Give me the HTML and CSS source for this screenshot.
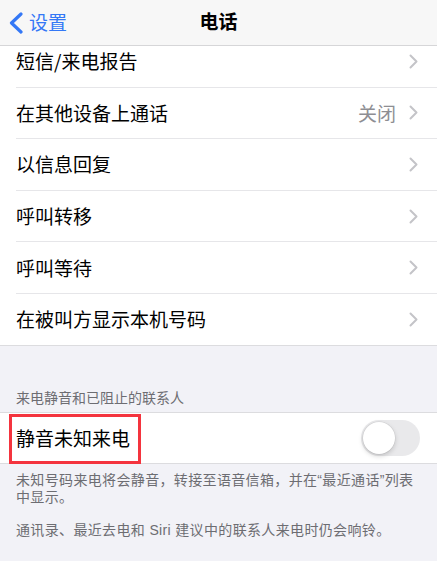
FILE: index.html
```html
<!DOCTYPE html>
<html lang="zh-CN">
<head>
<meta charset="utf-8">
<link rel="stylesheet" href="styles.css">
</head>
<body>
<div class="screen">
  <header class="nav">
    <div class="back">
      <svg class="back-chev" width="16" height="22" viewBox="0 0 16 22"><path d="M13 2 L3.5 11 L13 20" fill="none" stroke="#3478f6" stroke-width="3.2" stroke-linecap="round" stroke-linejoin="round"/></svg>
      <span class="back-label">设置</span>
    </div>
    <div class="title">电话</div>
    <div></div>
  </header>

  <section class="group first">
    <div class="cell"><div class="cell-inner"><span class="label">短信/来电报告</span><span class="acc"><svg class="chev" width="9" height="15" viewBox="0 0 9 15"><path d="M1.5 1.5 L7.5 7.5 L1.5 13.5" fill="none" stroke="#c4c4c8" stroke-width="2" stroke-linecap="round" stroke-linejoin="round"/></svg></span></div></div>
    <div class="cell"><div class="cell-inner"><span class="label">在其他设备上通话</span><span class="acc"><span class="value">关闭</span><svg class="chev" width="9" height="15" viewBox="0 0 9 15"><path d="M1.5 1.5 L7.5 7.5 L1.5 13.5" fill="none" stroke="#c4c4c8" stroke-width="2" stroke-linecap="round" stroke-linejoin="round"/></svg></span></div></div>
    <div class="cell"><div class="cell-inner"><span class="label">以信息回复</span><span class="acc"><svg class="chev" width="9" height="15" viewBox="0 0 9 15"><path d="M1.5 1.5 L7.5 7.5 L1.5 13.5" fill="none" stroke="#c4c4c8" stroke-width="2" stroke-linecap="round" stroke-linejoin="round"/></svg></span></div></div>
    <div class="cell"><div class="cell-inner"><span class="label">呼叫转移</span><span class="acc"><svg class="chev" width="9" height="15" viewBox="0 0 9 15"><path d="M1.5 1.5 L7.5 7.5 L1.5 13.5" fill="none" stroke="#c4c4c8" stroke-width="2" stroke-linecap="round" stroke-linejoin="round"/></svg></span></div></div>
    <div class="cell"><div class="cell-inner"><span class="label">呼叫等待</span><span class="acc"><svg class="chev" width="9" height="15" viewBox="0 0 9 15"><path d="M1.5 1.5 L7.5 7.5 L1.5 13.5" fill="none" stroke="#c4c4c8" stroke-width="2" stroke-linecap="round" stroke-linejoin="round"/></svg></span></div></div>
    <div class="cell"><div class="cell-inner last"><span class="label">在被叫方显示本机号码</span><span class="acc"><svg class="chev" width="9" height="15" viewBox="0 0 9 15"><path d="M1.5 1.5 L7.5 7.5 L1.5 13.5" fill="none" stroke="#c4c4c8" stroke-width="2" stroke-linecap="round" stroke-linejoin="round"/></svg></span></div></div>
  </section>

  <div class="section-header">来电静音和已阻止的联系人</div>

  <section class="group">
    <div class="cell toggle-cell">
      <div class="cell-inner last"><span class="label">静音未知来电</span><span class="switch"><span class="knob"></span></span></div>
      <div class="highlight"></div>
    </div>
  </section>

  <div class="footer">
    <p class="foot-p">未知号码来电将会静音，转接至语音信箱，并在“最近通话”列表中显示。</p>
    <p class="foot-p second">通讯录、最近去电和 Siri 建议中的联系人来电时仍会响铃。</p>
  </div>
</div>
</body>
</html>
```

FILE: styles.css
```css
* { box-sizing: border-box; }
html, body {
  margin: 0;
  padding: 0;
  background: #f2f2f7;
}
body {
  font-family: "Noto Sans CJK SC", "Noto Sans", sans-serif;
  color: #000;
  width: 437px;
  height: 561px;
  overflow: hidden;
}
.screen {
  width: 437px;
  height: 561px;
  overflow: hidden;
  background: #f2f2f7;
}
.nav {
  position: relative;
  z-index: 2;
  height: 46px;
  background: #f7f7f7;
  border-bottom: 1px solid #d6d6d8;
  display: grid;
  grid-template-columns: 1fr auto 1fr;
  align-items: center;
}
.back {
  display: flex;
  align-items: center;
  padding-left: 8px;
  gap: 5px;
  color: #3478f6;
  font-size: 19px;
  line-height: 22px;
}
.back-chev { display: block; flex: none; }
.back-label { margin-top: -2px; }
.title {
  font-size: 19px;
  font-weight: 700;
  line-height: 22px;
  margin-top: -3px;
}
.group {
  background: #fff;
  border-top: 1px solid #dcdcdf;
  border-bottom: 1px solid #dcdcdf;
}
.group.first {
  margin-top: -10px;
  border-top: none;
}
.cell {
  padding-left: 16px;
  position: relative;
}
.cell-inner {
  height: 51.6px;
  display: flex;
  align-items: center;
  justify-content: space-between;
  border-bottom: 1px solid #e6e6e9;
  padding-right: 19px;
}
.cell-inner.last { border-bottom: none; }
.group.first .cell-inner.last { height: 50.6px; }
.label {
  font-size: 19px;
  line-height: 24px;
  letter-spacing: 0;
}
.acc {
  display: flex;
  align-items: center;
  gap: 13px;
}
.value {
  color: #8e8e93;
  font-size: 19px;
  line-height: 24px;
}
.chev { display: block; }
.section-header {
  padding: 42px 16px 6px;
  font-size: 14px;
  line-height: 18px;
  color: #6d6d72;
}
.toggle-cell .cell-inner {
  height: 50px;
  padding-right: 17px;
}
.switch {
  position: relative;
  width: 59px;
  height: 36px;
  border-radius: 18px;
  background: #e9e9eb;
  flex: none;
}
.knob {
  position: absolute;
  left: 2px;
  top: 2px;
  width: 32px;
  height: 32px;
  border-radius: 50%;
  background: #fff;
  box-shadow: 0 2px 5px rgba(0,0,0,0.18), 0 0 0 0.5px rgba(0,0,0,0.08);
}
.highlight {
  position: absolute;
  left: 9px;
  top: 1px;
  width: 132px;
  height: 50px;
  border: 3px solid #f4343e;
  pointer-events: none;
}
.footer {
  padding: 8px 12px 0 16px;
  color: #6d6d72;
  font-family: "Liberation Sans", "Noto Sans CJK SC", sans-serif;
  font-size: 14px;
  line-height: 17.5px;
  letter-spacing: 0.35px;
}
.foot-p { margin: 0; }
.foot-p.second { margin-top: 15px; }
```
